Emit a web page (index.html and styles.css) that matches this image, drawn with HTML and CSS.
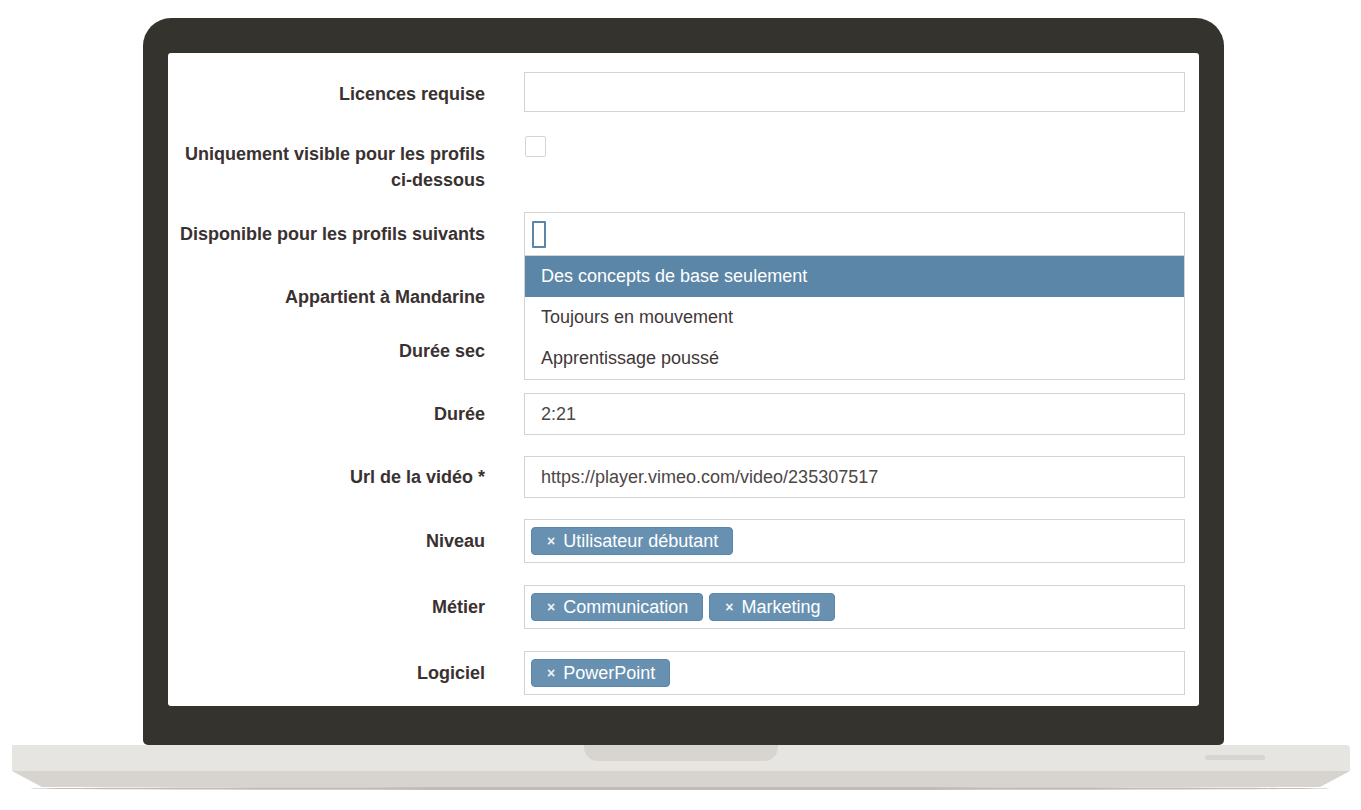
FILE: index.html
```html
<!DOCTYPE html>
<html lang="fr">
<head>
<meta charset="utf-8">
<title>Formulaire vidéo</title>
<link rel="stylesheet" href="styles.css">
</head>
<body>
<div class="device">
  <div class="lid">
    <div class="screen">
      <form class="form">
        <div class="row">
          <label class="label label-first">Licences requise</label>
          <div class="control input h40"></div>
        </div>
        <div class="row row-top row-check">
          <label class="label label-wrap">Uniquement visible pour les profils <span class="nowrap">ci-dessous</span></label>
          <div class="checkbox"></div>
        </div>
        <div class="row row-select">
          <label class="label">Disponible pour les profils suivants</label>
          <div class="select-wrap">
            <div class="control input h44 search"><span class="caret-box"></span></div>
            <ul class="dropdown">
              <li class="option active">Des concepts de base seulement</li>
              <li class="option">Toujours en mouvement</li>
              <li class="option">Apprentissage poussé</li>
            </ul>
          </div>
        </div>
        <div class="row row-plain h40row">
          <label class="label">Appartient à Mandarine</label>
          <div></div>
        </div>
        <div class="row row-top sec-row">
          <label class="label">Durée sec</label>
          <div></div>
        </div>
        <div class="row">
          <label class="label">Durée</label>
          <div class="control input h42">2:21</div>
        </div>
        <div class="row">
          <label class="label">Url de la vidéo *</label>
          <div class="control input h42">https://player.vimeo.com/video/235307517</div>
        </div>
        <div class="row gap22">
          <label class="label">Niveau</label>
          <div class="control tags h44">
            <span class="tag"><span class="x">×</span>Utilisateur débutant</span>
          </div>
        </div>
        <div class="row gap22">
          <label class="label">Métier</label>
          <div class="control tags h44">
            <span class="tag"><span class="x">×</span>Communication</span>
            <span class="tag"><span class="x">×</span>Marketing</span>
          </div>
        </div>
        <div class="row last">
          <label class="label">Logiciel</label>
          <div class="control tags h44">
            <span class="tag"><span class="x">×</span>PowerPoint</span>
          </div>
        </div>
      </form>
    </div>
  </div>
  <div class="base">
    <div class="slab">
      <div class="notch"></div>
      <div class="slot"></div>
    </div>
    <div class="slab-lower"></div>
    <div class="shadow"></div>
  </div>
</div>
</body>
</html>
```
FILE: styles.css
```css
* { box-sizing: border-box; }
html, body {
  margin: 0;
  padding: 0;
  background: #ffffff;
}
body {
  font-family: "Liberation Sans", Arial, sans-serif;
  width: 1361px;
  height: 810px;
  overflow: hidden;
}
.device {
  padding-top: 18px;
  width: 1361px;
}
.lid {
  margin-left: 143px;
  width: 1081px;
  height: 727px;
  background: #35332e;
  border-radius: 28px 28px 5px 5px;
  padding: 35px 25px 39px 25px;
}
.screen {
  background: #ffffff;
  height: 653px;
  border-radius: 3px;
  overflow: hidden;
  padding-top: 19px;
}
.form {
  display: flex;
  flex-direction: column;
  margin: 0;
}
.row {
  display: grid;
  grid-template-columns: 317px 661px;
  column-gap: 39px;
  align-items: center;
  margin-bottom: 21px;
}
.row.row-check { margin-bottom: 19px; }
.row.gap22 { margin-bottom: 22px; }
.row.last { margin-bottom: 0; }
.row-top { align-items: start; }
.label {
  text-align: right;
  font-weight: bold;
  font-size: 18px;
  color: #3a3131;
  line-height: 26px;
}
.label-first { padding-top: 4px; }
.label-wrap {
  padding-top: 8px;
}
.nowrap { white-space: nowrap; }
.checkbox {
  width: 21px;
  height: 21px;
  border: 1px solid #d4d4d4;
  border-radius: 2px;
  margin-top: 3px;
  margin-left: 1px;
}
.control {
  border: 1px solid #d3d3d3;
  background: #ffffff;
}
.input {
  display: flex;
  align-items: center;
  padding-left: 16px;
  font-size: 18px;
  color: #4d4646;
}
.h40 { height: 40px; }
.h42 { height: 42px; }
.h44 { height: 44px; }
.h40row { height: 40px; }
.sec-row { height: 34px; }
.select-wrap { position: relative; }
.search { padding-left: 7px; }
.caret-box {
  display: block;
  width: 14px;
  height: 27px;
  border: 2px solid #5b86a7;
  border-radius: 1px;
}
.dropdown {
  position: absolute;
  left: 0;
  top: 44px;
  width: 661px;
  margin: 0;
  padding: 0;
  list-style: none;
  background: #ffffff;
  border: 1px solid #d3d3d3;
  border-top: none;
  z-index: 2;
}
.option {
  height: 41px;
  display: flex;
  align-items: center;
  padding-left: 16px;
  font-size: 18px;
  color: #3f3838;
}
.option.active {
  background: #5b86a7;
  color: #ffffff;
}
.tags {
  display: flex;
  align-items: center;
  gap: 6px;
  padding-left: 6px;
}
.tag {
  display: inline-flex;
  align-items: center;
  height: 28px;
  padding: 0 14px 0 15px;
  background: #6890b0;
  border: 1px solid #5c86a7;
  border-radius: 4px;
  color: #ffffff;
  font-size: 18px;
}
.tag .x {
  font-size: 14px;
  font-weight: bold;
  margin-right: 8px;
  color: #eef3f7;
}
.base {
  margin-left: 12px;
  width: 1338px;
}
.slab {
  height: 26px;
  background: #e7e5e2;
  border-radius: 0 4px 0 0;
  display: grid;
  grid-template-columns: 1fr 194px 1fr;
  align-items: start;
}
.notch {
  grid-column: 2;
  height: 16px;
  background: #d8d4cf;
  border-radius: 0 0 14px 14px;
}
.slot {
  grid-column: 3;
  justify-self: end;
  width: 60px;
  height: 5px;
  margin-top: 10px;
  margin-right: 85px;
  background: #d8d4cf;
  border-radius: 3px;
}
.slab-lower {
  height: 16px;
  background: #d7d3ce;
  clip-path: polygon(0 0, 100% 0, calc(100% - 30px) 100%, 30px 100%);
}
.shadow {
  margin-left: 18px;
  width: 1300px;
  height: 3px;
  background: #c0bcb7;
  border-radius: 50%;
}
```
